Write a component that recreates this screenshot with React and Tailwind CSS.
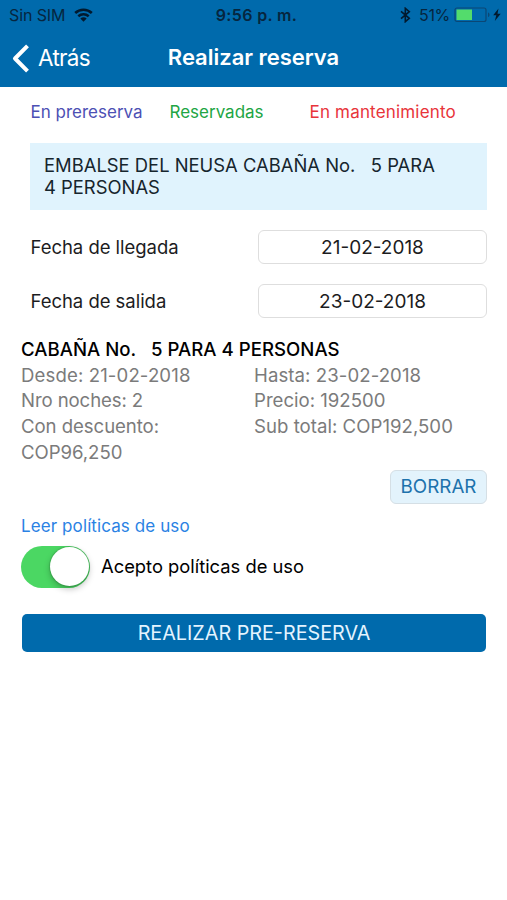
function StatusBar() {
  return (
    <div className="flex h-[29px] items-center pl-[9px] pr-[6px] text-[#06263f]">
      <div className="flex flex-1 items-center gap-[9px]">
        <span className="text-[16px] tracking-[-0.1px] whitespace-nowrap">Sin SIM</span>
        <svg width="19" height="14" viewBox="0 0 19 14" fill="none" stroke="#021a2e">
          <path d="M1.2 4.9C5.8.7 13.2.7 17.8 4.9" strokeWidth="2.7" />
          <path d="M4.3 8.3C7.3 5.6 11.7 5.6 14.7 8.3" strokeWidth="2.5" />
          <path d="M9.5 13.7L6.3 10.5C8.2 8.9 10.8 8.9 12.7 10.5Z" fill="#021a2e" stroke="none" />
        </svg>
      </div>
      <span className="pl-[3px] text-[16px] font-semibold tracking-[0.35px] whitespace-nowrap">9:56 p. m.</span>
      <div className="flex flex-1 items-center justify-end">
        <svg className="mr-[8px]" width="11" height="16" viewBox="0 0 11 16" fill="none" stroke="#021a2e" strokeWidth="1.6">
          <path d="M1 4.3L9.3 11.3L5.3 14.7V1.3L9.3 4.7L1 11.7" />
        </svg>
        <span className="text-[16px] tracking-[-0.3px]">51%</span>
        <svg className="ml-[4px]" width="47" height="16" viewBox="0 0 47 16">
          <rect x="1" y="1" width="31" height="13.5" rx="2" fill="none" stroke="#0b4775" strokeWidth="1.2" />
          <rect x="2.5" y="2.5" width="15.5" height="10.5" fill="#53dc6c" />
          <path d="M34 5.5v4.5c1-.3 1.5-1.2 1.5-2.25S35 5.8 34 5.5z" fill="#0b4775" />
          <path d="M44.5 1.5L39.2 8.3H42.3L40.8 14L46.7 6.7H43.5Z" fill="#021a2e" />
        </svg>
      </div>
    </div>
  );
}

function NavBar() {
  return (
    <div className="grid h-[58px] grid-cols-[1fr_auto_1fr] items-center text-white">
      <div className="flex items-center gap-[9px] pl-[12px]">
        <svg width="17" height="29" viewBox="0 0 17 29" fill="none" stroke="white" strokeWidth="4" strokeLinejoin="round">
          <path d="M15.5 1.8L3 14.5L15.5 27.2" />
        </svg>
        <span className="text-[22.5px] tracking-[-0.7px]">Atrás</span>
      </div>
      <h1 className="pb-px text-[22px] font-semibold tracking-[-0.02px] whitespace-nowrap">Realizar reserva</h1>
    </div>
  );
}

function DateField({ label, value }) {
  return (
    <div className="flex h-[34px] items-center">
      <span className="w-[228px] pt-[2px] pl-[0.5px] text-[18.5px] tracking-[-0.03px]">{label}</span>
      <div className="flex h-[34px] w-[229px] items-center justify-center rounded-[6px] border-[1.5px] border-[#dedede] pt-[2px] text-[19px]">
        {value}
      </div>
    </div>
  );
}

export default function App() {
  return (
    <div className="min-h-screen w-[507px] bg-white font-['Inter','Liberation_Sans',sans-serif] text-[#1c1c1e]">
      <header className="h-[87px] bg-[#006aac]">
        <StatusBar />
        <NavBar />
      </header>

      <div className="flex h-[56px] items-center pb-[5px] pl-[30.5px] text-[17px] whitespace-nowrap">
        <span className="w-[139px] text-[#4c50b4]">En prereserva</span>
        <span className="w-[140px] text-[#21a544]">Reservadas</span>
        <span className="tracking-[0.18px] text-[#e8343a]">En mantenimiento</span>
      </div>

      <div className="mr-[20px] ml-[30px] h-[67px] bg-[#e0f3fd] pt-[11px] pl-[14px] text-[18.4px] leading-[22px] text-[#16252d]">
        <div className="whitespace-pre">EMBALSE DEL NEUSA CABAÑA No.   5 PARA</div>
        <div>4 PERSONAS</div>
      </div>

      <div className="mt-[20px] flex flex-col gap-[20px] pl-[30px]">
        <DateField label="Fecha de llegada" value="21-02-2018" />
        <DateField label="Fecha de salida" value="23-02-2018" />
      </div>

      <section className="mt-[19px] pl-[21px] text-[18.6px] leading-[25.7px] text-[#7b7b7b]">
        <h2 className="font-medium tracking-[0.03px] whitespace-pre text-black">CABAÑA No.   5 PARA 4 PERSONAS</h2>
        <div className="grid grid-cols-[233px_1fr]">
          <span className="tracking-[0.12px]">Desde: 21-02-2018</span>
          <span className="tracking-[0.08px]">Hasta: 23-02-2018</span>
          <span className="tracking-[-0.1px]">Nro noches: 2</span>
          <span>Precio: 192500</span>
          <span className="tracking-[-0.06px]">Con descuento:<br />COP96,250</span>
          <span className="tracking-[0.03px]">Sub total: COP192,500</span>
        </div>
      </section>

      <div className="mt-[4px] flex justify-end pr-[20px]">
        <button className="h-[34px] w-[97px] rounded-[6px] border-[1.5px] border-[#d5dfe5] bg-[#e3f3fc] pt-[2px] text-[18.8px] text-[#1d72ac]">BORRAR</button>
      </div>

      <a className="mt-[9px] block pl-[21px] text-[17px] leading-[26px] tracking-[0.1px] text-[#2a82e4]">Leer políticas de uso</a>

      <div className="mt-[7px] flex items-center pl-[21px]">
        <div className="flex h-[42px] w-[69px] items-center justify-end rounded-full bg-[#4bd763] pr-[1px]">
          <div className="size-[39px] rounded-full bg-white shadow-[0_3px_6px_rgba(0,0,0,0.25),0_0_1px_1px_rgba(0,0,0,0.12)]" />
        </div>
        <span className="ml-[11px] text-[18.35px] text-black">Acepto políticas de uso</span>
      </div>

      <button className="mt-[26px] ml-[22px] flex h-[38px] w-[464px] items-center justify-center rounded-[5px] bg-[#006aac] pt-[3px] text-[19.75px] text-[#e4f4ff]">
        REALIZAR PRE-RESERVA
      </button>
    </div>
  );
}
